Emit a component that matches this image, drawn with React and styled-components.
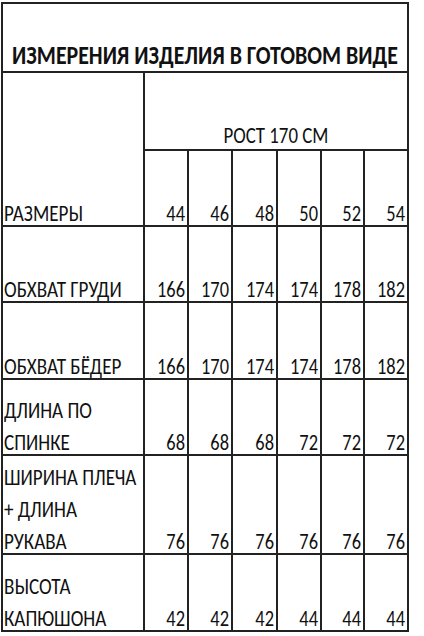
import React from 'react'
import styled, { createGlobalStyle } from 'styled-components'

const Global = createGlobalStyle`
  html, body {
    margin: 0;
    background: #fff;
  }
  body {
    font-family: "Carlito", "Lato", "Liberation Sans", sans-serif;
    color: #111;
  }
`

const Page = styled.div`
  padding: 2px 0 0 1px;
`

const Table = styled.table`
  border-collapse: collapse;
  table-layout: fixed;
  width: 408px;
  border: 2px solid #222;
`

// td height does not count the collapsed border halves, so take 2px off
const Cell = styled.td`
  border: 2px solid #222;
  padding: 0 ${p => (p.num ? 2 : 1)}px;
  height: ${p => p.h - 2}px;
  vertical-align: bottom;
  font-size: 23px;
  line-height: 32px;
  white-space: nowrap;
`

// squeezes the wide Carlito glyphs to the narrow face of the original sheet
const Squeeze = styled.div`
  margin-bottom: -4px;
  text-align: ${p => p.origin};
  transform: scaleX(${p => p.k});
  transform-origin: ${p => p.origin} bottom;
`

const Centered = styled.div`
  display: flex;
  justify-content: center;
  white-space: nowrap;
  transform: scaleX(${p => p.k});
`

const Title = styled.td`
  border: 2px solid #222;
  height: 67px;
  padding: 0;
  vertical-align: bottom;
  font-size: 26px;
  font-weight: bold;
  line-height: 31px;
  overflow: hidden;
`

const Height = styled.td`
  border: 2px solid #222;
  height: 75px;
  padding: 0 0 1px 0;
  vertical-align: bottom;
  font-size: 23px;
  line-height: 26px;
`

const sizes = [44, 46, 48, 50, 52, 54]
const widths = [44, 44, 45, 44, 43, 44]

const rows = [
  { label: ['ОБХВАТ ГРУДИ'], h: 76, values: [166, 170, 174, 174, 178, 182] },
  { label: ['ОБХВАТ БЁДЕР'], h: 77, values: [166, 170, 174, 174, 178, 182] },
  { label: ['ДЛИНА ПО', 'СПИНКЕ'], h: 76, values: [68, 68, 68, 72, 72, 72] },
  { label: ['ШИРИНА ПЛЕЧА', '+ ДЛИНА', 'РУКАВА'], h: 99, values: [76, 76, 76, 76, 76, 76] },
  { label: ['ВЫСОТА', 'КАПЮШОНА'], h: 77, values: [42, 42, 42, 44, 44, 44] },
]

const Label = ({ lines }) => (
  <Squeeze k={0.83} origin="left">
    {lines.map((l, i) => (
      <div key={i}>{l}</div>
    ))}
  </Squeeze>
)

const Num = ({ children }) => (
  <Squeeze k={0.8} origin="right">{children}</Squeeze>
)

export default function App() {
  return (
    <Page>
      <Global />
      <Table>
        <colgroup>
          <col style={{ width: 142 }} />
          {widths.map((w, i) => (
            <col key={i} style={{ width: w }} />
          ))}
        </colgroup>
        <tbody>
          <tr>
            <Title colSpan={7}>
              <Centered k={0.84}>ИЗМЕРЕНИЯ ИЗДЕЛИЯ В ГОТОВОМ ВИДЕ</Centered>
            </Title>
          </tr>
          <tr>
            <Cell rowSpan={2}>
              <Label lines={['РАЗМЕРЫ']} />
            </Cell>
            <Height colSpan={6}>
              <Centered k={0.82}>РОСТ 170 СМ</Centered>
            </Height>
          </tr>
          <tr>
            {sizes.map(s => (
              <Cell key={s} num h={76}>
                <Num>{s}</Num>
              </Cell>
            ))}
          </tr>
          {rows.map(r => (
            <tr key={r.label.join(' ')}>
              <Cell h={r.h}>
                <Label lines={r.label} />
              </Cell>
              {r.values.map((v, i) => (
                <Cell key={i} num h={r.h}>
                  <Num>{v}</Num>
                </Cell>
              ))}
            </tr>
          ))}
        </tbody>
      </Table>
    </Page>
  )
}
